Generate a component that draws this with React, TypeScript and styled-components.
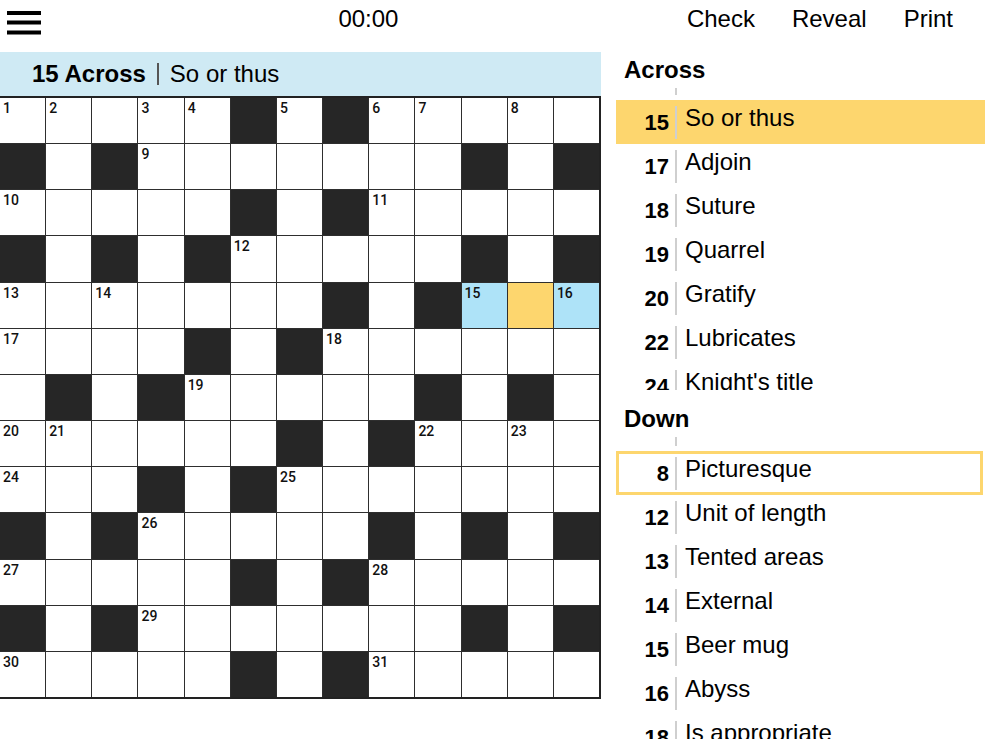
import React, { useLayoutEffect, useRef } from 'react';
import styled, { createGlobalStyle } from 'styled-components';

const GlobalStyle = createGlobalStyle`
  html, body {
    margin: 0;
    padding: 0;
    background: #fff;
  }
  body {
    font-family: 'Liberation Sans', Arial, Helvetica, sans-serif;
    color: #000;
    overflow: hidden;
  }
  * {
    box-sizing: border-box;
  }
`;

const YELLOW = '#fdd66e';
const BLUE = '#aee3f8';

// W = open square, B = block
const LAYOUT = [
  'WWWWWBWBWWWWW',
  'BWBWWWWWWWBWB',
  'WWWWWBWBWWWWW',
  'BWBWBWWWWWBWB',
  'WWWWWWWBWBWWW',
  'WWWWBWBWWWWWW',
  'WBWBWWWWWBWBW',
  'WWWWWWBWBWWWW',
  'WWWBWBWWWWWWW',
  'BWBWWWWWBWBWB',
  'WWWWWBWBWWWWW',
  'BWBWWWWWWWBWB',
  'WWWWWBWBWWWWW',
];

const ACROSS: Record<number, string> = {
  1: 'Fragrant flower',
  6: 'Concur',
  9: 'Imitator',
  10: 'Pass on',
  11: 'Scoff',
  12: 'Rub out',
  13: 'Outlaws',
  15: 'So or thus',
  17: 'Adjoin',
  18: 'Suture',
  19: 'Quarrel',
  20: 'Gratify',
  22: 'Lubricates',
  24: "Knight's title",
  25: 'Fight back',
  26: 'Fine powder',
  27: 'Cash register',
  28: 'Divide',
  29: 'Tribute',
  30: 'Requirements',
  31: 'Sag',
};

const DOWN: Record<number, string> = {
  2: 'Rouse',
  3: 'Ancient',
  4: 'Rubbish',
  5: 'Knot',
  6: 'Greek letter',
  7: 'Ponder',
  8: 'Picturesque',
  12: 'Unit of length',
  13: 'Tented areas',
  14: 'External',
  15: 'Beer mug',
  16: 'Abyss',
  18: 'Is appropriate',
  19: 'Idle talk',
  21: 'Notion',
  22: 'Ogle',
  23: 'Vessel',
  25: 'Slender',
  26: 'Fury',
  28: 'Level',
};

const SELECTED_ROW = 4;
const SELECTED_CELLS = [10, 11, 12];
const CURSOR_COL = 11;

const isOpen = (r: number, c: number) =>
  r >= 0 && r < 13 && c >= 0 && c < 13 && LAYOUT[r][c] === 'W';

function buildNumbers() {
  const nums: (number | null)[][] = [];
  let n = 0;
  for (let r = 0; r < 13; r++) {
    nums.push([]);
    for (let c = 0; c < 13; c++) {
      let value: number | null = null;
      if (isOpen(r, c)) {
        const across = !isOpen(r, c - 1) && isOpen(r, c + 1);
        const down = !isOpen(r - 1, c) && isOpen(r + 1, c);
        if (across || down) {
          n += 1;
          value = n;
        }
      }
      nums[r].push(value);
    }
  }
  return nums;
}

const NUMBERS = buildNumbers();

const Page = styled.div`
  width: 985px;
  height: 739px;
  overflow: hidden;
`;

const Header = styled.header`
  display: flex;
  align-items: flex-start;
  height: 52px;
`;

const MenuButton = styled.button`
  width: 50px;
  height: 38px;
  padding: 7px 0 0 7px;
  border: 0;
  background: none;
  text-align: left;
  cursor: pointer;

  svg {
    display: block;
  }
`;

const Timer = styled.div`
  flex: 1;
  text-align: center;
  font-size: 24px;
  line-height: 38px;
`;

const Actions = styled.nav`
  display: flex;
  gap: 37px;
  padding-right: 32px;
`;

const ActionButton = styled.button`
  padding: 0;
  border: 0;
  background: none;
  font-family: inherit;
  font-size: 24px;
  line-height: 38px;
  color: #000;
  cursor: pointer;
`;

const Main = styled.main`
  display: flex;
  align-items: flex-start;
`;

const BoardColumn = styled.section`
  width: 601px;
  flex-shrink: 0;
`;

const ClueBar = styled.div`
  display: flex;
  align-items: center;
  height: 44px;
  padding-left: 32px;
  background: #cfeaf4;
  font-size: 24px;
`;

const ClueBarLabel = styled.strong`
  font-weight: bold;
`;

const ClueBarDivider = styled.span`
  width: 2px;
  height: 22px;
  margin: 0 11px;
  background: #555;
`;

const Board = styled.div`
  display: grid;
  grid-template-columns: repeat(13, 1fr);
  gap: 1px;
  width: 601px;
  background: #2e2e2e;
  border: 2px solid #222;
  border-left: 0;
`;

type CellKind = 'open' | 'block' | 'word' | 'cursor';

const CELL_BG: Record<CellKind, string> = {
  open: '#fff',
  block: '#262626',
  word: BLUE,
  cursor: YELLOW,
};

const Cell = styled.div<{ $kind: CellKind }>`
  position: relative;
  aspect-ratio: 1;
  background: ${p => CELL_BG[p.$kind]};
`;

const CellNumber = styled.span`
  position: absolute;
  top: 3px;
  left: 3px;
  font-family: Roboto, 'Noto Sans', sans-serif;
  font-weight: 500;
  font-size: 14px;
  line-height: 1;
  color: #111;
`;

const CluePanel = styled.aside`
  display: flex;
  flex-direction: column;
  width: 369px;
  height: 687px;
  margin-left: 15px;
`;

const SectionTitle = styled.h2<{ $spaced?: boolean }>`
  margin: 0;
  padding: ${p => (p.$spaced ? '11px' : '0')} 0 1px 8px;
  font-size: 24px;
  font-weight: bold;
  line-height: 35px;
`;

const Scroller = styled.ol<{ $height?: number }>`
  position: relative;
  margin: 0;
  padding: 0;
  list-style: none;
  overflow: hidden;
  ${p => (p.$height ? `height: ${p.$height}px; flex-shrink: 0;` : 'flex: 1;')}
`;

const ClueItem = styled.li<{ $mode?: 'fill' | 'outline' }>`
  display: flex;
  align-items: center;
  height: 44px;
  background: ${p => (p.$mode === 'fill' ? YELLOW : 'transparent')};
  box-shadow: ${p => (p.$mode === 'outline' ? `inset 0 0 0 3px ${YELLOW}` : 'none')};
  margin-right: ${p => (p.$mode === 'outline' ? '2px' : '0')};
`;

const ClueNum = styled.span`
  width: 53px;
  flex-shrink: 0;
  text-align: right;
  font-size: 22px;
  font-weight: bold;
  line-height: 33px;
`;

const ClueText = styled.span`
  height: 33px;
  margin-left: 6px;
  padding-left: 8px;
  border-left: 2px solid #cfcfcf;
  font-size: 24px;
  line-height: 23px;
  white-space: nowrap;
`;

function MenuIcon() {
  return (
    <svg width="34" height="24" viewBox="0 0 34 24" aria-hidden="true">
      <rect x="0" y="0" width="34" height="4" fill="#000" />
      <rect x="0" y="9.5" width="34" height="4" fill="#000" />
      <rect x="0" y="19.5" width="34" height="4" fill="#000" />
    </svg>
  );
}

interface ClueListProps {
  clues: Record<number, string>;
  active: number;
  mode: 'fill' | 'outline';
  offset: number;
  height?: number;
}

function ClueList({ clues, active, mode, offset, height }: ClueListProps) {
  const listRef = useRef<HTMLOListElement>(null);
  const activeRef = useRef<HTMLLIElement>(null);

  // keep the selected clue near the top of its list
  useLayoutEffect(() => {
    if (listRef.current && activeRef.current) {
      listRef.current.scrollTop = activeRef.current.offsetTop - offset;
    }
  }, [offset]);

  return (
    <Scroller ref={listRef} $height={height}>
      {Object.keys(clues)
        .map(Number)
        .map(num => (
          <ClueItem
            key={num}
            ref={num === active ? activeRef : undefined}
            $mode={num === active ? mode : undefined}
          >
            <ClueNum>{num}</ClueNum>
            <ClueText>{clues[num]}</ClueText>
          </ClueItem>
        ))}
    </Scroller>
  );
}

function cellKind(r: number, c: number): CellKind {
  if (!isOpen(r, c)) return 'block';
  if (r === SELECTED_ROW && c === CURSOR_COL) return 'cursor';
  if (r === SELECTED_ROW && SELECTED_CELLS.includes(c)) return 'word';
  return 'open';
}

export default function App() {
  return (
    <>
      <GlobalStyle />
      <Page>
        <Header>
          <MenuButton aria-label="Menu">
            <MenuIcon />
          </MenuButton>
          <Timer>00:00</Timer>
          <Actions>
            <ActionButton>Check</ActionButton>
            <ActionButton>Reveal</ActionButton>
            <ActionButton>Print</ActionButton>
          </Actions>
        </Header>

        <Main>
          <BoardColumn>
            <ClueBar>
              <ClueBarLabel>15 Across</ClueBarLabel>
              <ClueBarDivider />
              <span>So or thus</span>
            </ClueBar>
            <Board>
              {LAYOUT.map((row, r) =>
                row.split('').map((_, c) => (
                  <Cell key={`${r}-${c}`} $kind={cellKind(r, c)}>
                    {NUMBERS[r][c] !== null && (
                      <CellNumber>{NUMBERS[r][c]}</CellNumber>
                    )}
                  </Cell>
                ))
              )}
            </Board>
          </BoardColumn>

          <CluePanel>
            <SectionTitle>Across</SectionTitle>
            <ClueList
              clues={ACROSS}
              active={15}
              mode="fill"
              offset={12}
              height={302}
            />
            <SectionTitle $spaced>Down</SectionTitle>
            <ClueList clues={DOWN} active={8} mode="outline" offset={14} />
          </CluePanel>
        </Main>
      </Page>
    </>
  );
}
